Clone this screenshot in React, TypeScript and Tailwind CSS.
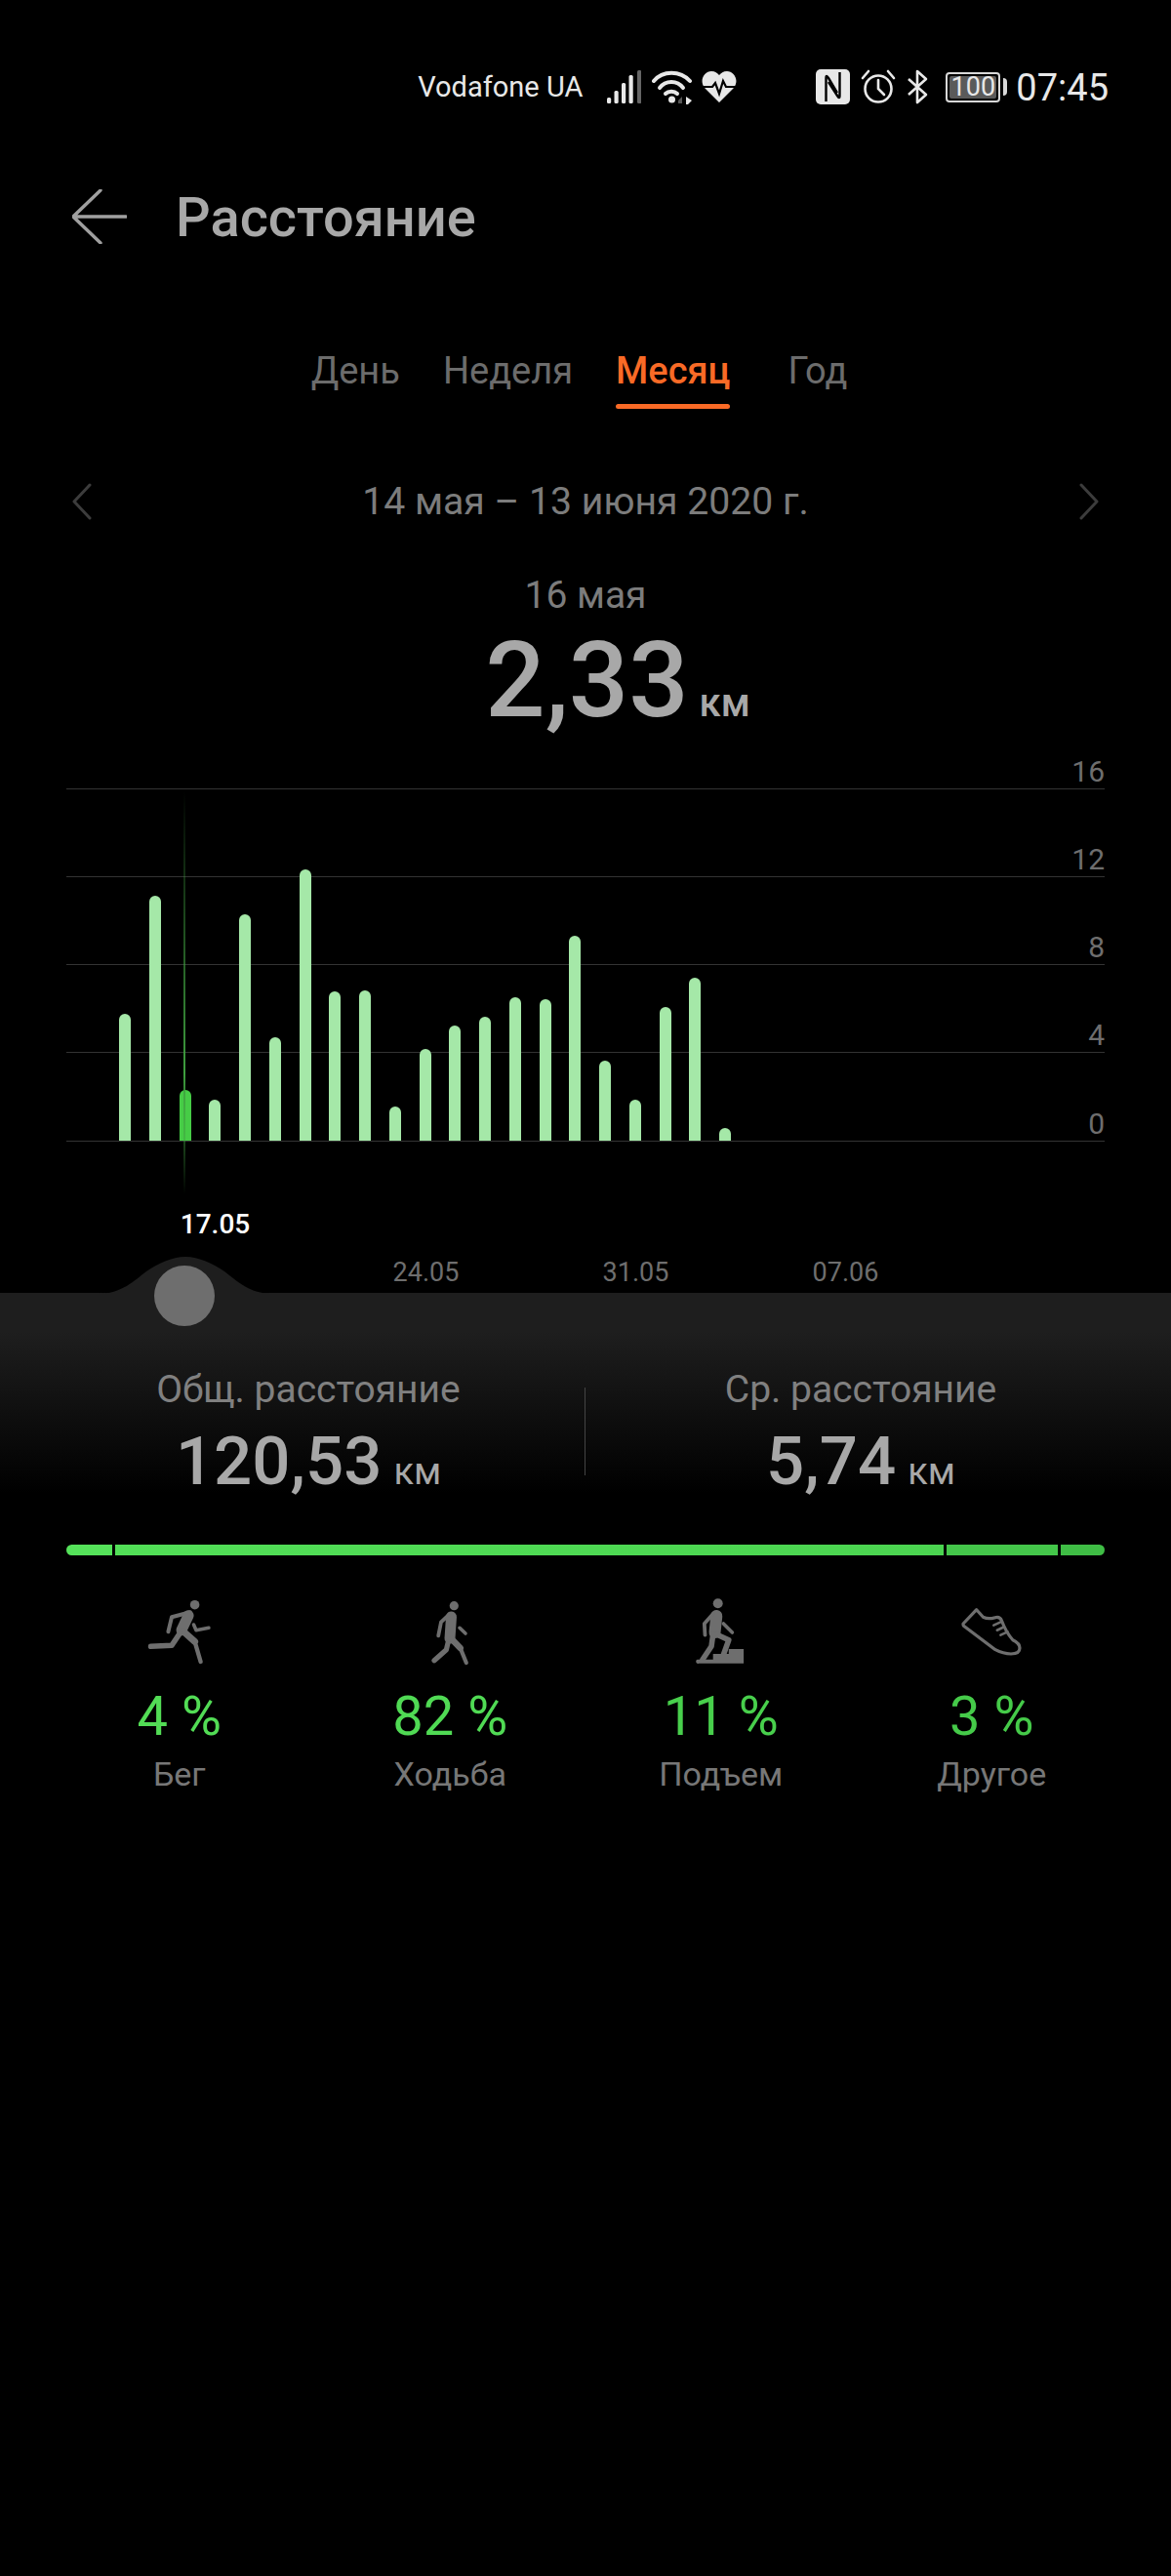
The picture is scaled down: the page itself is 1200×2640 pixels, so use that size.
import React from 'react';

const bars = [1039, 918, 1117, 1127, 937, 1063, 891, 1016, 1015, 1134, 1075, 1051, 1042, 1022, 1024, 959, 1087, 1127, 1032, 1002, 1156];

const StatusIcons = () => (
  <>
    <svg width="36" height="36" viewBox="0 0 36 36" className="ml-[24px]" fill="#e8e8e8">
      <rect x="1" y="29" width="4.2" height="6" rx="1.5" />
      <rect x="8.5" y="22" width="4.2" height="13" rx="1.5" />
      <rect x="16" y="14" width="4.2" height="21" rx="1.5" />
      <rect x="23.5" y="6" width="4.2" height="29" rx="1.5" />
      <rect x="32" y="1" width="4.2" height="34" rx="1.5" fill="#666" />
    </svg>
    <svg width="42" height="36" viewBox="0 0 42 36" className="ml-[11px]" fill="none" stroke="#e8e8e8" strokeWidth="4" strokeLinecap="round">
      <path d="M2 12 C11 1 29 1 39 12" />
      <path d="M8 19 C14 11 26 11 32 19" />
      <path d="M14 25 C17 22 23 22 26 25" />
      <circle cx="20.5" cy="31" r="3.5" fill="#e8e8e8" stroke="none" />
      <path d="M27 32 L31 28 V35 H27 Z" fill="#555" stroke="none" />
      <path d="M35 28 L41 32 L37 36 H35 Z" fill="#e8e8e8" stroke="none" />
    </svg>
    <svg width="36" height="34" viewBox="0 0 36 34" className="ml-[9px]">
      <path d="M18 33 L3 18 C-3 10 3 1 10 1 C14 1 16 3 18 5 C20 3 22 1 26 1 C33 1 39 10 33 18 Z" fill="#e8e8e8" />
      <path d="M0 17 H11 L14 13 L18 24 L22 11 L25 17 H36" fill="none" stroke="#000" strokeWidth="2.2" />
    </svg>
    <svg width="35" height="36" viewBox="0 0 35 36" className="ml-[81px]" fill="none">
      <rect width="35" height="36" rx="5" fill="#e8e8e8" />
      <path d="M10.5 33 V9 Q10.5 5 13 9 L22 24" stroke="#000" strokeWidth="2.4" />
      <path d="M24.5 3 V27 Q24.5 31 22 27 L13 13" stroke="#000" strokeWidth="2.4" />
    </svg>
    <svg width="36" height="36" viewBox="0 0 36 36" className="ml-[11px]" fill="none" stroke="#e8e8e8" strokeWidth="2.6" strokeLinecap="round">
      <circle cx="18" cy="20" r="13.5" />
      <path d="M18 11 V20 L24 26" />
      <path d="M2 9 L8 2 M34 9 L28 2" />
    </svg>
    <svg width="22" height="36" viewBox="0 0 22 36" className="ml-[11px]" fill="none" stroke="#e8e8e8" strokeWidth="2.6" strokeLinejoin="round">
      <path d="M2 10 L20 26 L11 34 V2 L20 10 L2 26" />
    </svg>
    <div className="ml-[18px] flex items-center">
      <div className="flex h-[31px] w-[56px] items-center justify-center rounded-[4px] border-2 border-[#d8d8d8] p-[2px]">
        <div className="flex h-full w-full items-center justify-center rounded-[2px] bg-[#5a5a5a] text-[27px] leading-none text-[#e8e8e8]">100</div>
      </div>
      <div className="ml-[3px] h-[18px] w-[4px] rounded-r-sm bg-[#d8d8d8]" />
    </div>
  </>
);

const RunIcon = () => (
  <svg width="72" height="72" viewBox="0 0 72 72" fill="none" stroke="#6e6e6e" strokeLinecap="round" strokeLinejoin="round">
    <circle cx="51.6" cy="7.7" r="4.8" fill="#6e6e6e" stroke="none" />
    <path d="M46.9 15.3 L28 20.3 L24.4 35.3" strokeWidth="4" />
    <path d="M45.1 18.7 L38 33.7" strokeWidth="11" />
    <path d="M50.5 28 L53 33.7 L65.9 31.3" strokeWidth="3.6" />
    <path d="M40 35 L51.6 45.3" strokeWidth="7" />
    <path d="M51.6 45.3 L57.6 66" strokeWidth="4.4" />
    <path d="M36.2 37 L28 49.3 L6.6 50.3" strokeWidth="5.6" />
  </svg>
);

const WalkIcon = () => (
  <svg width="72" height="72" viewBox="0 0 72 72" fill="none" stroke="#6e6e6e" strokeLinecap="round" strokeLinejoin="round">
    <circle cx="40.3" cy="8.7" r="4.6" fill="#6e6e6e" stroke="none" />
    <path d="M37.5 20 L36 42" strokeWidth="11" />
    <path d="M36 17 L27 25.3 L24.2 39.3" strokeWidth="3.8" />
    <path d="M46 31.3 L52 37" strokeWidth="3.6" />
    <path d="M38 43 L46.7 52" strokeWidth="6.5" />
    <path d="M46.7 52 L52.8 67" strokeWidth="4.2" />
    <path d="M34.2 46 L32.4 53.7 L20 64.7" strokeWidth="5.2" />
  </svg>
);

const ClimbIcon = () => (
  <svg width="72" height="72" viewBox="0 0 72 72" fill="none" stroke="#6e6e6e" strokeLinecap="round" strokeLinejoin="round">
    <circle cx="32.7" cy="6.3" r="5" fill="#6e6e6e" stroke="none" />
    <path d="M31.3 19 L29.5 36" strokeWidth="12" />
    <path d="M27.7 17 L18.8 27 L19.5 38.7" strokeWidth="3.8" />
    <path d="M38.4 27 L47.4 36" strokeWidth="3.6" />
    <path d="M31.3 38 L43.8 43.7 L38.4 58.7" strokeWidth="5.6" />
    <path d="M27.7 38 L26 50.3 L17 63.7" strokeWidth="5.6" />
    <path d="M11.6 63.7 H27.7 V58 H43.8 V53 H59.1 V67.7 H13 A2 2 0 0 1 11.6 63.7 Z" fill="#6e6e6e" stroke="none" />
  </svg>
);

const ShoeIcon = () => (
  <svg width="72" height="72" viewBox="0 0 72 72" fill="none" stroke="#6e6e6e" strokeWidth="3.2" strokeLinecap="round" strokeLinejoin="round">
    <path d="M20.7 12.7 L7.1 27 Q6.6 29 8.5 30 L40 53.7 Q48 58 56 58 Q65 58 65 52 Q65 47 57.9 43.7 Q51 36 46.5 24 Q45 20 41 20.5 Q33 23 27.5 20.3 Z" />
    <path d="M38.3 28.7 L45.4 25.3 M41.8 33.7 L49 30.3 M45.4 38.7 L52.5 35.3" strokeWidth="2.6" />
  </svg>
);

const activities = [
  { icon: <RunIcon />, pct: '4 %', label: 'Бег', color: 'text-[#52dc55]' },
  { icon: <WalkIcon />, pct: '82 %', label: 'Ходьба', color: 'text-[#50da54]' },
  { icon: <ClimbIcon />, pct: '11 %', label: 'Подъем', color: 'text-[#48cf4c]' },
  { icon: <ShoeIcon />, pct: '3 %', label: 'Другое', color: 'text-[#45ca49]' },
];

const App: React.FC = () => {
  return (
    <div className="h-[2640px] w-[1200px] overflow-hidden bg-black font-[Roboto,sans-serif]">
      {/* status bar */}
      <div className="flex h-[178px] items-center justify-end pr-[64px] text-[#e8e8e8]">
        <span className="mt-[2px] text-[29px]">Vodafone UA</span>
        <StatusIcons />
        <span className="ml-[9px] mt-[2px] text-[38px]">07:45</span>
      </div>

      {/* header */}
      <div className="flex h-[88px] items-center pl-[74px]">
        <svg width="56" height="56" viewBox="0 0 56 56" fill="none" stroke="#a0a0a0" strokeWidth="3.4" strokeLinecap="round" strokeLinejoin="round">
          <path d="M29 1 L1 28 L29 55 M1 28 H55" />
        </svg>
        <h1 className="ml-[50px] mt-[2px] text-[56px] font-medium text-[#a8a8a8]">Расстояние</h1>
      </div>

      {/* tabs */}
      <div className="flex h-[228px] items-center justify-center pr-[13px] text-[38px] text-[#6c6c6c]">
        <span className="px-[22px]">День</span>
        <span className="px-[22px]">Неделя</span>
        <span className="relative mx-[22px] font-medium text-[#f96a26]">
          Месяц
          <span className="absolute left-0 right-0 top-[62px] h-[5px] rounded-full bg-[#f96a26]" />
        </span>
        <span className="pl-[37px] pr-[22px]">Год</span>
      </div>

      {/* date range */}
      <div className="flex h-[40px] items-center justify-between px-[74px] text-[39.2px] text-[#7c7c7c]">
        <svg width="20" height="38" viewBox="0 0 20 38" fill="none" stroke="#3c3c3c" strokeWidth="3" strokeLinecap="round" strokeLinejoin="round">
          <path d="M18 2 L2 19 L18 36" />
        </svg>
        <span>14 мая – 13 июня 2020 г.</span>
        <svg width="20" height="38" viewBox="0 0 20 38" fill="none" stroke="#3c3c3c" strokeWidth="3" strokeLinecap="round" strokeLinejoin="round">
          <path d="M2 2 L18 19 L2 36" />
        </svg>
      </div>

      <div className="mt-[56px] text-center text-[39px] leading-[40px] text-[#7c7c7c]">16 мая</div>
      <div className="mt-[12px] flex h-[110px] items-baseline justify-center pl-[66px] leading-[110px] text-[#a8a8a8]">
        <span className="text-[108px] font-medium">2,33</span>
        <span className="ml-[11px] text-[40px] font-medium">км</span>
      </div>

      {/* chart */}
      <div className="relative mx-[68px] mt-[17px] text-[30px] leading-none text-[#6e6e6e]">
        <div className="flex h-[40px] items-start justify-end border-b border-[#333] pt-[7px]">16</div>
        <div className="flex h-[90px] items-end justify-end border-b border-[#333] pb-[2px]">12</div>
        <div className="flex h-[90px] items-end justify-end border-b border-[#333] pb-[2px]">8</div>
        <div className="flex h-[90px] items-end justify-end border-b border-[#333] pb-[2px]">4</div>
        <div className="flex h-[91px] items-end justify-end border-b border-[#333] pb-[2px]">0</div>
        <div className="absolute bottom-[1px] left-[54px] flex items-end gap-[18.75px]">
          {bars.map((top, i) => (
            <div
              key={i}
              className={`w-[12px] rounded-t-full ${i === 2 ? 'bg-[#46cc46]' : 'bg-[#a5e8a8]'}`}
              style={{ height: 1169 - top }}
            />
          ))}
        </div>
        <div className="absolute left-[120px] top-[42px] h-[413px] w-[2px] bg-linear-to-b from-transparent via-[#3f9f3f] via-70% to-transparent" />
      </div>

      {/* x axis */}
      <div className="mt-[69px] w-[215px] translate-x-[113px] text-center text-[28px] font-medium leading-[32px] text-white">17.05</div>
      <div className="mt-[16px] flex pl-[329px] text-center text-[27px] leading-[34px] text-[#6e6e6e]">
        <span className="w-[215px]">24.05</span>
        <span className="w-[215px]">31.05</span>
        <span className="w-[215px]">07.06</span>
      </div>

      {/* bottom panel */}
      <div className="relative mt-[4px] bg-linear-to-b/srgb from-[#1e1e1e] from-[40px] to-black to-[205px] px-[68px]">
        <svg width="180" height="38" viewBox="0 0 180 38" className="absolute -top-[37px] left-[100px]" fill="#1e1e1e">
          <path d="M0 38 C25 38 38 24 50 15 C62 7 76 0 90 0 C104 0 118 7 130 15 C142 24 155 38 180 38 Z" />
        </svg>
        <div className="absolute -top-[28px] left-[158px] h-[62px] w-[62px] rounded-full bg-[#6e6e6e]" />

        <div className="flex items-start pt-[73px]">
          <div className="flex w-[496px] flex-col items-center">
            <span className="text-[39px] leading-[52px] text-[#808080]">Общ. расстояние</span>
            <div className="mt-[4px] flex h-[88px] items-baseline leading-[88px] text-[#a8a8a8]">
              <span className="text-[69px] font-medium">120,53</span>
              <span className="ml-[12px] text-[38px]">км</span>
            </div>
          </div>
          <div className="ml-[35px] mr-[32px] mt-[24px] h-[90px] w-px bg-[#444]" />
          <div className="flex w-[500px] flex-col items-center">
            <span className="text-[39px] leading-[52px] text-[#808080]">Ср. расстояние</span>
            <div className="mt-[4px] flex h-[88px] items-baseline leading-[88px] text-[#a8a8a8]">
              <span className="text-[69px] font-medium">5,74</span>
              <span className="ml-[12px] text-[38px]">км</span>
            </div>
          </div>
        </div>

        {/* share bar */}
        <div className="mt-[41px] flex h-[11px] gap-[3px] overflow-hidden rounded-full">
          <div className="w-[47px] bg-[#55e25a]" />
          <div className="w-[849px] bg-linear-to-r from-[#52df57] to-[#4bd450]" />
          <div className="w-[114px] bg-[#44c64a]" />
          <div className="w-[45px] bg-[#3fbd45]" />
        </div>
      </div>

      {/* activity types */}
      <div className="mt-[43px] grid grid-cols-4 px-[45px]">
        {activities.map((a) => (
          <div key={a.label} className="flex flex-col items-center">
            {a.icon}
            <span className={`mt-[16px] text-[56px] leading-[68px] ${a.color}`}>{a.pct}</span>
            <span className="mt-[3px] text-[34px] leading-[44px] text-[#777]">{a.label}</span>
          </div>
        ))}
      </div>
    </div>
  );
};

export default App;
